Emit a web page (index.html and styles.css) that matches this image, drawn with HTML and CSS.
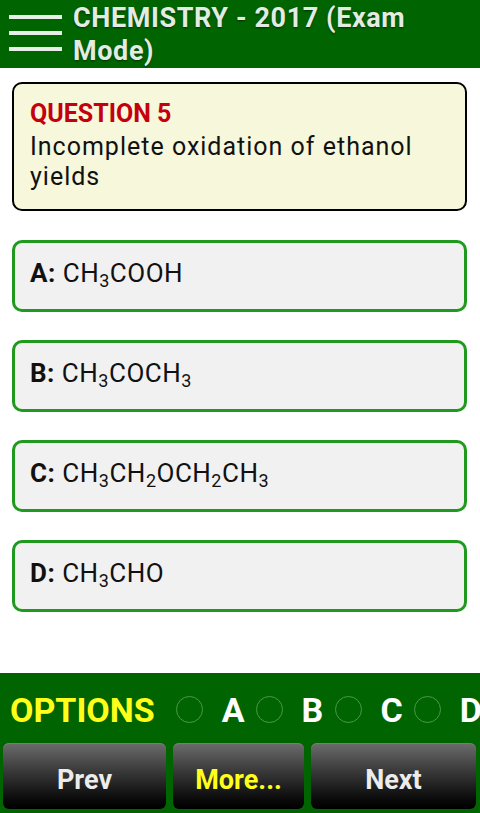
FILE: index.html
```html
<!DOCTYPE html>
<html>
<head>
<meta charset="utf-8">
<link rel="stylesheet" href="styles.css">
</head>
<body>
<div class="app">
  <header class="topbar">
    <div class="menu">
      <span class="bar"></span><span class="bar"></span><span class="bar"></span>
    </div>
    <h1 class="title">CHEMISTRY - 2017 (Exam Mode)</h1>
  </header>
  <main class="content">
    <section class="question">
      <div class="qlabel">QUESTION 5</div>
      <div class="qtext">Incomplete oxidation of ethanol yields</div>
    </section>
    <div class="option"><b>A:</b> CH<sub>3</sub>COOH</div>
    <div class="option"><b>B:</b> CH<sub>3</sub>COCH<sub>3</sub></div>
    <div class="option"><b>C:</b> CH<sub>3</sub>CH<sub>2</sub>OCH<sub>2</sub>CH<sub>3</sub></div>
    <div class="option"><b>D:</b> CH<sub>3</sub>CHO</div>
  </main>
  <footer class="footer">
    <div class="choices">
      <span class="optlabel">OPTIONS</span>
      <span class="radio"><span class="ring"></span><span class="letter">A</span></span>
      <span class="radio"><span class="ring"></span><span class="letter">B</span></span>
      <span class="radio"><span class="ring"></span><span class="letter">C</span></span>
      <span class="radio"><span class="ring"></span><span class="letter">D</span></span>
    </div>
    <div class="buttons">
      <button class="btn">Prev</button>
      <button class="btn more">More...</button>
      <button class="btn">Next</button>
    </div>
  </footer>
</div>
</body>
</html>
```
FILE: styles.css
```css
html, body {
  margin: 0;
  padding: 0;
  background: #ffffff;
}
body {
  font-family: Roboto, "Liberation Sans", sans-serif;
  width: 480px;
  height: 813px;
  overflow: hidden;
}
.app {
  display: flex;
  flex-direction: column;
  height: 813px;
}
.topbar {
  height: 68px;
  background: #006400;
  display: flex;
  align-items: flex-start;
  box-sizing: border-box;
  padding: 2px 0 0 9px;
}
.menu {
  display: flex;
  flex-direction: column;
  gap: 12px;
  margin-top: 13px;
  width: 53px;
}
.bar {
  display: block;
  height: 4px;
  background: #e6f0e6;
}
.title {
  margin: 0 0 0 11px;
  font-size: 27px;
  line-height: 33px;
  font-weight: bold;
  letter-spacing: 0.6px;
  color: #e2ece2;
  text-shadow: 0 1px 2px rgba(0,0,0,0.5);
  width: 370px;
}
.content {
  flex: 1;
  padding: 14px 13px 0 12px;
}
.question {
  border: 2px solid #000;
  border-radius: 10px;
  background: #f7f7dc;
  padding: 15px 16px 17px 16px;
  height: 129px;
  box-sizing: border-box;
}
.qlabel {
  color: #c4000c;
  font-weight: bold;
  font-size: 25px;
  line-height: 30px;
  margin-bottom: 3px;
}
.qtext {
  color: #111;
  font-size: 25px;
  line-height: 30px;
  letter-spacing: 1px;
}
.option {
  margin-top: 28px;
  height: 72px;
  box-sizing: border-box;
  border: 3px solid #1f9a1f;
  border-radius: 10px;
  background: #f1f1f1;
  padding: 15px 16px 0 15px;
  font-size: 26px;
  line-height: 30px;
  letter-spacing: 0.5px;
  color: #111;
}
.question + .option {
  margin-top: 29px;
}
.option b {
  font-weight: bold;
}
.option sub {
  font-size: 18px;
  line-height: 0;
  vertical-align: -5px;
}
.footer {
  height: 140px;
  background: #006400;
  display: flex;
  flex-direction: column;
}
.choices {
  height: 70px;
  display: flex;
  align-items: center;
  padding: 4px 0 0 10px;
  box-sizing: border-box;
  white-space: nowrap;
  overflow: hidden;
}
.optlabel {
  color: #ffff1a;
  font-weight: bold;
  font-size: 34px;
  margin-right: 21px;
}
.radio {
  display: inline-flex;
  align-items: center;
  margin-right: 11px;
  flex-shrink: 0;
}
.ring {
  width: 25px;
  height: 25px;
  border: 1px solid #4a9a4a;
  border-radius: 50%;
  margin-right: 19px;
  margin-top: -2px;
  flex-shrink: 0;
}
.letter {
  color: #ffffff;
  font-weight: bold;
  font-size: 34px;
  min-width: 22px;
}
.buttons {
  display: grid;
  grid-template-columns: 163px 131px 165px;
  gap: 7px;
  padding: 0 4px 0 3px;
}
.btn {
  height: 66px;
  border: none;
  border-radius: 6px;
  background: linear-gradient(#6c6c6c 0%, #3c3c3c 40%, #0a0a0a 85%, #000 100%);
  box-shadow: inset 0 1px 0 #7a7a7a;
  color: #ececec;
  font-family: Roboto, "Liberation Sans", sans-serif;
  font-weight: bold;
  font-size: 27px;
  padding: 7px 0 0 0;
}
.btn.more {
  color: #ffff1a;
}
```
